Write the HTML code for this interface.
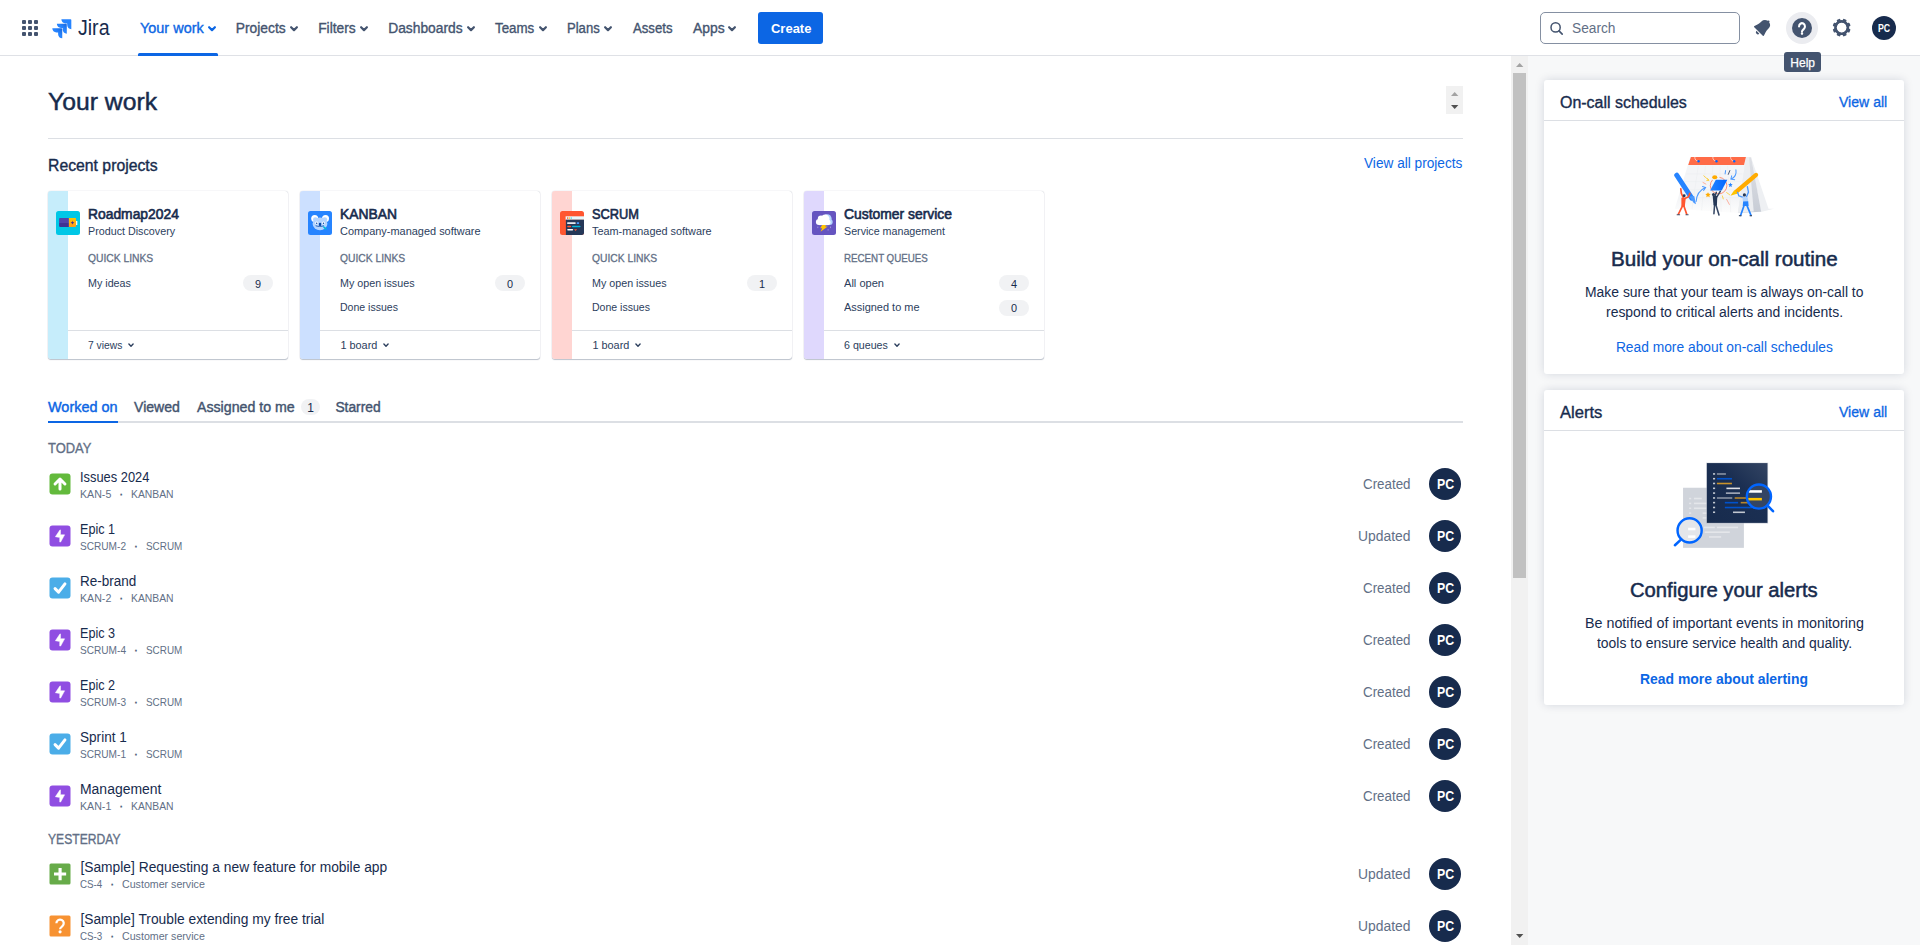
<!DOCTYPE html>
<html lang="en">
<head>
<meta charset="utf-8">
<title>Your work - Jira</title>
<style>
*{box-sizing:border-box;margin:0;padding:0}
html,body{width:1920px;height:945px;overflow:hidden;background:#fff}
body{font-family:"Liberation Sans",sans-serif;font-size:14px;color:#172B4D;position:relative}
.a{position:absolute;white-space:pre;transform-origin:0 50%}
svg{display:block;overflow:visible}
.card{background:#fff;border-radius:3px;box-shadow:0 1px 1px rgba(9,30,66,.25),0 0 1px rgba(9,30,66,.31)}
.badge{background:#F1F2F4;border-radius:8px;height:16px}
.av{width:32px;height:32px;border-radius:50%;background:#172B4D}
.hr{height:1px;background:#DCDFE4}
.rc{background:#fff;border-radius:3px;box-shadow:0 0 10px rgba(9,30,66,.15)}

</style>
</head>
<body>
<!-- ============ RIGHT PANEL BG ============ -->
<div class="a" style="left:1528px;top:56px;width:392px;height:889px;background:#F7F8F9"></div>
<!-- ============ MAIN CONTENT ============ -->
<span class="a" style="left:48.20px;top:89px;font-size:23.5px;line-height:26px;color:#172B4D;transform:scaleX(1.0517);-webkit-text-stroke:0.45px #172B4D;">Your work</span>
<div class="a" style="left:1446px;top:86px;width:17px;height:28px;background:#F1F1F1"></div>
<svg class="a" style="left:1450.8px;top:92.3px" width="7.4" height="4" viewBox="0 0 7.4 4"><polygon points="0,4 3.7,0 7.4,4" fill="#A3A3A3"/></svg>
<svg class="a" style="left:1450.8px;top:104.7px" width="7.4" height="4" viewBox="0 0 7.4 4"><polygon points="0,0 7.4,0 3.7,4" fill="#505050"/></svg>
<div class="a hr" style="left:48px;top:138px;width:1415px"></div>
<span class="a" style="left:48.30px;top:157px;font-size:15.6px;line-height:17px;color:#172B4D;transform:scaleX(1.0116);-webkit-text-stroke:0.35px #172B4D;">Recent projects</span>
<span class="a" style="left:1364.20px;top:156px;font-size:13.8px;line-height:15px;color:#0C66E4;transform:scaleX(0.9896);">View all projects</span>
<div class="a card" style="left:48px;top:191px;width:240px;height:168px"></div>
<div class="a" style="left:48px;top:191px;width:20px;height:168px;background:#C6EDFB;border-radius:3px 0 0 3px"></div>
<svg class="a" style="left:56px;top:211px" width="24" height="24" viewBox="0 0 24 24"><defs><linearGradient id="pb1" x1="0" y1="0" x2="0" y2="1"><stop offset="0" stop-color="#5243AA"/><stop offset="0.5" stop-color="#5243AA"/><stop offset="0.55" stop-color="#403294"/><stop offset="1" stop-color="#403294"/></linearGradient>
<linearGradient id="pb2" x1="0" y1="0" x2="0" y2="1"><stop offset="0" stop-color="#FFC400"/><stop offset="0.5" stop-color="#FFB010"/><stop offset="1" stop-color="#FF991F"/></linearGradient></defs>
<rect width="24" height="24" rx="2.5" fill="#00C7E6"/><rect x="20" y="10" width="1.3" height="4" fill="#fff"/>
<path d="M3.9 7.1h9v8.8h-9a.8.8 0 0 1-.8-.8v-7.2a.8.8 0 0 1 .8-.8z" fill="url(#pb1)"/><path d="M12.9 7.1h6.4a.8.8 0 0 1 .8.8v7.2a.8.8 0 0 1-.8.8h-6.4z" fill="url(#pb2)"/>
<path d="M16.5 9.6c.25 1.4.6 1.8 1.9 2.1-1.3.3-1.65.7-1.9 2.1-.25-1.4-.6-1.8-1.9-2.1 1.3-.3 1.65-.7 1.9-2.1z" fill="#403294"/></svg>
<span class="a" style="left:88.40px;top:207px;font-size:13.8px;line-height:15px;color:#172B4D;transform:scaleX(1.0042);-webkit-text-stroke:0.6px #172B4D;">Roadmap2024</span>
<span class="a" style="left:88.40px;top:225px;font-size:10.8px;line-height:12px;color:#2C3E5D;transform:scaleX(0.9942);">Product Discovery</span>
<span class="a" style="left:88.40px;top:252px;font-size:10.8px;line-height:12px;color:#626F86;transform:scaleX(0.9531);-webkit-text-stroke:0.3px #626F86;">QUICK LINKS</span>
<span class="a" style="left:88.40px;top:277px;font-size:10.9px;line-height:12px;color:#2C3E5D;transform:scaleX(0.9841);">My ideas</span>
<div class="a badge" style="left:243px;top:275.0px;width:30px"></div>
<span class="a" style="left:254.97px;top:278px;font-size:10.9px;line-height:12px;color:#172B4D;">9</span>
<div class="a hr" style="left:68px;top:330px;width:220px"></div>
<span class="a" style="left:88.40px;top:339px;font-size:10.9px;line-height:12px;color:#2C3E5D;transform:scaleX(0.9442);">7 views</span>
<svg class="a" style="left:128.1px;top:343.0px" width="6" height="5" viewBox="0 0 6 5"><path d="M0.9 1.1 L3 3.2 L5.1 1.1" fill="none" stroke="#2C3E5D" stroke-width="1.4" stroke-linecap="round" stroke-linejoin="round"/></svg>
<div class="a card" style="left:300px;top:191px;width:240px;height:168px"></div>
<div class="a" style="left:300px;top:191px;width:20px;height:168px;background:#CCE0FF;border-radius:3px 0 0 3px"></div>
<svg class="a" style="left:308px;top:211px" width="24" height="24" viewBox="0 0 24 24"><rect width="24" height="24" rx="2.5" fill="#2684FF"/>
<circle cx="6.7" cy="7.6" r="3.5" fill="#fff"/><circle cx="17.5" cy="7.6" r="3.5" fill="#fff"/>
<circle cx="7.4" cy="8.6" r="2.4" fill="#B3D4FF"/><circle cx="16.8" cy="8.6" r="2.4" fill="#B3D4FF"/>
<ellipse cx="12" cy="12.8" rx="7.4" ry="6.4" fill="#B3D4FF"/>
<circle cx="8.7" cy="12" r="1.5" fill="#fff"/><circle cx="15.5" cy="12" r="1.5" fill="#fff"/>
<circle cx="8.7" cy="12.3" r="0.75" fill="#0747A6"/><circle cx="15.5" cy="12.3" r="0.75" fill="#0747A6"/>
<rect x="10.9" y="11.8" width="2.3" height="3.2" rx="1" fill="#0747A6"/><path d="M8 14.9c1.2.7 6 .7 7.6 0" fill="none" stroke="#0747A6" stroke-width="0.8" stroke-linecap="round"/>
<path d="M14.9 15.2c1.6-.2 3.2 1 4.2 3.4-2 .1-3.8-1-4.2-3.4z" fill="#00B8D9"/></svg>
<span class="a" style="left:340.40px;top:207px;font-size:13.8px;line-height:15px;color:#172B4D;transform:scaleX(1.0044);-webkit-text-stroke:0.6px #172B4D;">KANBAN</span>
<span class="a" style="left:340.40px;top:225px;font-size:10.8px;line-height:12px;color:#2C3E5D;transform:scaleX(1.0134);">Company-managed software</span>
<span class="a" style="left:340.40px;top:252px;font-size:10.8px;line-height:12px;color:#626F86;transform:scaleX(0.9531);-webkit-text-stroke:0.3px #626F86;">QUICK LINKS</span>
<span class="a" style="left:340.40px;top:277px;font-size:10.9px;line-height:12px;color:#2C3E5D;transform:scaleX(0.9845);">My open issues</span>
<div class="a badge" style="left:495px;top:275.0px;width:30px"></div>
<span class="a" style="left:506.97px;top:278px;font-size:10.9px;line-height:12px;color:#172B4D;">0</span>
<span class="a" style="left:340.40px;top:301px;font-size:10.9px;line-height:12px;color:#2C3E5D;transform:scaleX(0.9677);">Done issues</span>
<div class="a hr" style="left:320px;top:330px;width:220px"></div>
<span class="a" style="left:340.40px;top:339px;font-size:10.9px;line-height:12px;color:#2C3E5D;">1 board</span>
<svg class="a" style="left:382.79999999999995px;top:343.0px" width="6" height="5" viewBox="0 0 6 5"><path d="M0.9 1.1 L3 3.2 L5.1 1.1" fill="none" stroke="#2C3E5D" stroke-width="1.4" stroke-linecap="round" stroke-linejoin="round"/></svg>
<div class="a card" style="left:552px;top:191px;width:240px;height:168px"></div>
<div class="a" style="left:552px;top:191px;width:20px;height:168px;background:#FFD5D2;border-radius:3px 0 0 3px"></div>
<svg class="a" style="left:560px;top:211px" width="24" height="24" viewBox="0 0 24 24"><defs><clipPath id="pcc"><rect width="24" height="24" rx="2.5"/></clipPath></defs>
<g clip-path="url(#pcc)"><rect width="24" height="24" fill="#FF5630"/><rect x="5.6" y="5.3" width="19" height="3.5" fill="#E9F8FC"/><rect x="5.9" y="8.7" width="19" height="16" fill="#253858"/>
<rect x="7" y="6.2" width="1.3" height="1.8" fill="#FF7452"/><rect x="8.9" y="6.2" width="1.3" height="1.8" fill="#FFD44D"/><rect x="10.7" y="6.2" width="1.3" height="1.8" fill="#79E2F2"/>
<rect x="7.2" y="11.2" width="8.4" height="1.9" rx="0.3" fill="#EBECF0"/><rect x="16.8" y="11.2" width="2.3" height="1.9" rx="0.3" fill="#4C9AFF"/>
<rect x="7.2" y="14.7" width="4" height="1.6" rx="0.8" fill="#FF5630"/><rect x="12" y="14.7" width="8.6" height="1.6" rx="0.8" fill="#00B8D9"/>
<rect x="7.2" y="17.9" width="6" height="1.6" rx="0.8" fill="#fff"/><path d="M14 18.3h3.2l-1.6 1.7z" fill="#FF5630"/></g></svg>
<span class="a" style="left:592.40px;top:207px;font-size:13.8px;line-height:15px;color:#172B4D;transform:scaleX(0.9290);-webkit-text-stroke:0.6px #172B4D;">SCRUM</span>
<span class="a" style="left:592.40px;top:225px;font-size:10.8px;line-height:12px;color:#2C3E5D;transform:scaleX(1.0065);">Team-managed software</span>
<span class="a" style="left:592.40px;top:252px;font-size:10.8px;line-height:12px;color:#626F86;transform:scaleX(0.9531);-webkit-text-stroke:0.3px #626F86;">QUICK LINKS</span>
<span class="a" style="left:592.40px;top:277px;font-size:10.9px;line-height:12px;color:#2C3E5D;transform:scaleX(0.9845);">My open issues</span>
<div class="a badge" style="left:747px;top:275.0px;width:30px"></div>
<span class="a" style="left:758.97px;top:278px;font-size:10.9px;line-height:12px;color:#172B4D;">1</span>
<span class="a" style="left:592.40px;top:301px;font-size:10.9px;line-height:12px;color:#2C3E5D;transform:scaleX(0.9677);">Done issues</span>
<div class="a hr" style="left:572px;top:330px;width:220px"></div>
<span class="a" style="left:592.40px;top:339px;font-size:10.9px;line-height:12px;color:#2C3E5D;">1 board</span>
<svg class="a" style="left:634.8px;top:343.0px" width="6" height="5" viewBox="0 0 6 5"><path d="M0.9 1.1 L3 3.2 L5.1 1.1" fill="none" stroke="#2C3E5D" stroke-width="1.4" stroke-linecap="round" stroke-linejoin="round"/></svg>
<div class="a card" style="left:804px;top:191px;width:240px;height:168px"></div>
<div class="a" style="left:804px;top:191px;width:20px;height:168px;background:#DFD8FD;border-radius:3px 0 0 3px"></div>
<svg class="a" style="left:812px;top:211px" width="24" height="24" viewBox="0 0 24 24"><rect width="24" height="24" rx="2.5" fill="#6554C0"/>
<g fill="#B3D4FF"><circle cx="15.2" cy="7.6" r="4.4"/><circle cx="17.7" cy="11.1" r="3"/><rect x="12" y="9" width="5.5" height="5.1"/></g>
<g fill="#fff"><circle cx="6.9" cy="11.1" r="3"/><circle cx="9" cy="7.7" r="3.2"/><circle cx="13.2" cy="7.7" r="4.3"/><circle cx="15.7" cy="11.3" r="2.8"/><rect x="6.9" y="8" width="8.8" height="6.1"/></g>
<path d="M10.1 14.1h3.9l-.8 1.5h2.5l-7.2 5.2 1.7-3.5H8.2z" fill="#FFC400"/>
<rect x="5.3" y="15.5" width="1" height="1.6" fill="#998DD9"/><rect x="18" y="15.5" width="1" height="1.6" fill="#998DD9"/><rect x="15.6" y="18" width="1" height="1.6" fill="#998DD9"/></svg>
<span class="a" style="left:844.40px;top:207px;font-size:13.8px;line-height:15px;color:#172B4D;transform:scaleX(1.0061);-webkit-text-stroke:0.6px #172B4D;">Customer service</span>
<span class="a" style="left:844.40px;top:225px;font-size:10.8px;line-height:12px;color:#2C3E5D;transform:scaleX(0.9899);">Service management</span>
<span class="a" style="left:844.40px;top:252px;font-size:10.8px;line-height:12px;color:#626F86;transform:scaleX(0.9030);-webkit-text-stroke:0.3px #626F86;">RECENT QUEUES</span>
<span class="a" style="left:844.40px;top:277px;font-size:10.9px;line-height:12px;color:#2C3E5D;transform:scaleX(1.0163);">All open</span>
<div class="a badge" style="left:999px;top:275.0px;width:30px"></div>
<span class="a" style="left:1010.97px;top:278px;font-size:10.9px;line-height:12px;color:#172B4D;">4</span>
<span class="a" style="left:844.40px;top:301px;font-size:10.9px;line-height:12px;color:#2C3E5D;transform:scaleX(1.0056);">Assigned to me</span>
<div class="a badge" style="left:999px;top:299.5px;width:30px"></div>
<span class="a" style="left:1010.97px;top:302px;font-size:10.9px;line-height:12px;color:#172B4D;">0</span>
<div class="a hr" style="left:824px;top:330px;width:220px"></div>
<span class="a" style="left:844.40px;top:339px;font-size:10.9px;line-height:12px;color:#2C3E5D;transform:scaleX(0.9774);">6 queues</span>
<svg class="a" style="left:893.5999999999999px;top:343.0px" width="6" height="5" viewBox="0 0 6 5"><path d="M0.9 1.1 L3 3.2 L5.1 1.1" fill="none" stroke="#2C3E5D" stroke-width="1.4" stroke-linecap="round" stroke-linejoin="round"/></svg>
<span class="a" style="left:48.30px;top:400px;font-size:13.8px;line-height:15px;color:#0C66E4;transform:scaleX(1.0471);-webkit-text-stroke:0.4px #0C66E4;">Worked on</span>
<span class="a" style="left:134.20px;top:400px;font-size:13.8px;line-height:15px;color:#44546F;transform:scaleX(1.0196);-webkit-text-stroke:0.4px #44546F;">Viewed</span>
<span class="a" style="left:196.80px;top:400px;font-size:13.8px;line-height:15px;color:#44546F;transform:scaleX(1.0272);-webkit-text-stroke:0.4px #44546F;">Assigned to me</span>
<div class="a badge" style="left:301px;top:399px;width:19px"></div>
<span class="a" style="left:307.16px;top:401px;font-size:12px;line-height:14px;color:#172B4D;">1</span>
<span class="a" style="left:335.40px;top:400px;font-size:13.8px;line-height:15px;color:#44546F;-webkit-text-stroke:0.4px #44546F;">Starred</span>
<div class="a" style="left:48px;top:421px;width:1415px;height:2px;background:#DCDFE4"></div>
<div class="a" style="left:48px;top:421px;width:70px;height:2px;background:#0C66E4"></div>
<span class="a" style="left:48.30px;top:440px;font-size:14.2px;line-height:16px;color:#626F86;transform:scaleX(0.9122);-webkit-text-stroke:0.35px #626F86;">TODAY</span>
<span class="a" style="left:48.30px;top:831px;font-size:14.2px;line-height:16px;color:#626F86;transform:scaleX(0.8540);-webkit-text-stroke:0.35px #626F86;">YESTERDAY</span>
<svg class="a" style="left:48px;top:472px" width="24" height="24" viewBox="0 0 16 16"><rect x="1" y="1" width="14" height="14" rx="2" fill="#63BA3C"/><path d="M8 11.3V4.8M4.7 8 8 4.7 11.3 8" fill="none" stroke="#fff" stroke-width="2" stroke-linecap="round" stroke-linejoin="round"/></svg>
<span class="a" style="left:80.40px;top:470px;font-size:13.8px;line-height:15px;color:#172B4D;transform:scaleX(0.9327);">Issues 2024</span>
<span class="a" style="left:80.40px;top:488px;font-size:10.8px;line-height:12px;color:#626F86;transform:scaleX(0.9839);">KAN-5</span>
<span class="a" style="left:118.93px;top:486px;font-size:13px;line-height:15px;color:#44546F;-webkit-text-stroke:0.3px #44546F;">·</span>
<span class="a" style="left:130.80px;top:488px;font-size:10.8px;line-height:12px;color:#626F86;transform:scaleX(0.9593);">KANBAN</span>
<span class="a" style="left:1363.00px;top:477px;font-size:13.8px;line-height:15px;color:#626F86;transform:scaleX(0.9675);">Created</span>
<div class="a av" style="left:1429px;top:468px"></div>
<span class="a" style="left:1436.70px;top:477px;font-size:13.8px;line-height:15px;color:#fff;font-weight:700;transform:scaleX(0.8919);">PC</span>
<svg class="a" style="left:48px;top:524px" width="24" height="24" viewBox="0 0 16 16"><rect x="1" y="1" width="14" height="14" rx="2" fill="#904EE2"/><path d="M8 3.9 8.35 4.05 8.35 7.1 11.1 7.2 8.45 12.05 7.8 12.05 7.8 9 4.9 8.5z" fill="#fff" stroke="#fff" stroke-width="0.3" stroke-linejoin="round"/></svg>
<span class="a" style="left:80.40px;top:522px;font-size:13.8px;line-height:15px;color:#172B4D;transform:scaleX(0.9150);">Epic 1</span>
<span class="a" style="left:80.40px;top:540px;font-size:10.8px;line-height:12px;color:#626F86;transform:scaleX(0.9352);">SCRUM-2</span>
<span class="a" style="left:133.63px;top:538px;font-size:13px;line-height:15px;color:#44546F;-webkit-text-stroke:0.3px #44546F;">·</span>
<span class="a" style="left:145.50px;top:540px;font-size:10.8px;line-height:12px;color:#626F86;transform:scaleX(0.9168);">SCRUM</span>
<span class="a" style="left:1358.00px;top:529px;font-size:13.8px;line-height:15px;color:#626F86;transform:scaleX(1.0063);">Updated</span>
<div class="a av" style="left:1429px;top:520px"></div>
<span class="a" style="left:1436.70px;top:529px;font-size:13.8px;line-height:15px;color:#fff;font-weight:700;transform:scaleX(0.8919);">PC</span>
<svg class="a" style="left:48px;top:576px" width="24" height="24" viewBox="0 0 16 16"><rect x="1" y="1" width="14" height="14" rx="2" fill="#4BADE8"/><path d="M4.7 8.4 7.05 10.75 11.3 5.3" fill="none" stroke="#fff" stroke-width="2" stroke-linecap="round" stroke-linejoin="round"/></svg>
<span class="a" style="left:80.40px;top:574px;font-size:13.8px;line-height:15px;color:#172B4D;transform:scaleX(0.9786);">Re-brand</span>
<span class="a" style="left:80.40px;top:592px;font-size:10.8px;line-height:12px;color:#626F86;transform:scaleX(0.9839);">KAN-2</span>
<span class="a" style="left:118.93px;top:590px;font-size:13px;line-height:15px;color:#44546F;-webkit-text-stroke:0.3px #44546F;">·</span>
<span class="a" style="left:130.80px;top:592px;font-size:10.8px;line-height:12px;color:#626F86;transform:scaleX(0.9593);">KANBAN</span>
<span class="a" style="left:1363.00px;top:581px;font-size:13.8px;line-height:15px;color:#626F86;transform:scaleX(0.9675);">Created</span>
<div class="a av" style="left:1429px;top:572px"></div>
<span class="a" style="left:1436.70px;top:581px;font-size:13.8px;line-height:15px;color:#fff;font-weight:700;transform:scaleX(0.8919);">PC</span>
<svg class="a" style="left:48px;top:628px" width="24" height="24" viewBox="0 0 16 16"><rect x="1" y="1" width="14" height="14" rx="2" fill="#904EE2"/><path d="M8 3.9 8.35 4.05 8.35 7.1 11.1 7.2 8.45 12.05 7.8 12.05 7.8 9 4.9 8.5z" fill="#fff" stroke="#fff" stroke-width="0.3" stroke-linejoin="round"/></svg>
<span class="a" style="left:80.40px;top:626px;font-size:13.8px;line-height:15px;color:#172B4D;transform:scaleX(0.9150);">Epic 3</span>
<span class="a" style="left:80.40px;top:644px;font-size:10.8px;line-height:12px;color:#626F86;transform:scaleX(0.9352);">SCRUM-4</span>
<span class="a" style="left:133.63px;top:642px;font-size:13px;line-height:15px;color:#44546F;-webkit-text-stroke:0.3px #44546F;">·</span>
<span class="a" style="left:145.50px;top:644px;font-size:10.8px;line-height:12px;color:#626F86;transform:scaleX(0.9168);">SCRUM</span>
<span class="a" style="left:1363.00px;top:633px;font-size:13.8px;line-height:15px;color:#626F86;transform:scaleX(0.9675);">Created</span>
<div class="a av" style="left:1429px;top:624px"></div>
<span class="a" style="left:1436.70px;top:633px;font-size:13.8px;line-height:15px;color:#fff;font-weight:700;transform:scaleX(0.8919);">PC</span>
<svg class="a" style="left:48px;top:680px" width="24" height="24" viewBox="0 0 16 16"><rect x="1" y="1" width="14" height="14" rx="2" fill="#904EE2"/><path d="M8 3.9 8.35 4.05 8.35 7.1 11.1 7.2 8.45 12.05 7.8 12.05 7.8 9 4.9 8.5z" fill="#fff" stroke="#fff" stroke-width="0.3" stroke-linejoin="round"/></svg>
<span class="a" style="left:80.40px;top:678px;font-size:13.8px;line-height:15px;color:#172B4D;transform:scaleX(0.9150);">Epic 2</span>
<span class="a" style="left:80.40px;top:696px;font-size:10.8px;line-height:12px;color:#626F86;transform:scaleX(0.9352);">SCRUM-3</span>
<span class="a" style="left:133.63px;top:694px;font-size:13px;line-height:15px;color:#44546F;-webkit-text-stroke:0.3px #44546F;">·</span>
<span class="a" style="left:145.50px;top:696px;font-size:10.8px;line-height:12px;color:#626F86;transform:scaleX(0.9168);">SCRUM</span>
<span class="a" style="left:1363.00px;top:685px;font-size:13.8px;line-height:15px;color:#626F86;transform:scaleX(0.9675);">Created</span>
<div class="a av" style="left:1429px;top:676px"></div>
<span class="a" style="left:1436.70px;top:685px;font-size:13.8px;line-height:15px;color:#fff;font-weight:700;transform:scaleX(0.8919);">PC</span>
<svg class="a" style="left:48px;top:732px" width="24" height="24" viewBox="0 0 16 16"><rect x="1" y="1" width="14" height="14" rx="2" fill="#4BADE8"/><path d="M4.7 8.4 7.05 10.75 11.3 5.3" fill="none" stroke="#fff" stroke-width="2" stroke-linecap="round" stroke-linejoin="round"/></svg>
<span class="a" style="left:80.40px;top:730px;font-size:13.8px;line-height:15px;color:#172B4D;transform:scaleX(0.9840);">Sprint 1</span>
<span class="a" style="left:80.40px;top:748px;font-size:10.8px;line-height:12px;color:#626F86;transform:scaleX(0.9352);">SCRUM-1</span>
<span class="a" style="left:133.63px;top:746px;font-size:13px;line-height:15px;color:#44546F;-webkit-text-stroke:0.3px #44546F;">·</span>
<span class="a" style="left:145.50px;top:748px;font-size:10.8px;line-height:12px;color:#626F86;transform:scaleX(0.9168);">SCRUM</span>
<span class="a" style="left:1363.00px;top:737px;font-size:13.8px;line-height:15px;color:#626F86;transform:scaleX(0.9675);">Created</span>
<div class="a av" style="left:1429px;top:728px"></div>
<span class="a" style="left:1436.70px;top:737px;font-size:13.8px;line-height:15px;color:#fff;font-weight:700;transform:scaleX(0.8919);">PC</span>
<svg class="a" style="left:48px;top:784px" width="24" height="24" viewBox="0 0 16 16"><rect x="1" y="1" width="14" height="14" rx="2" fill="#904EE2"/><path d="M8 3.9 8.35 4.05 8.35 7.1 11.1 7.2 8.45 12.05 7.8 12.05 7.8 9 4.9 8.5z" fill="#fff" stroke="#fff" stroke-width="0.3" stroke-linejoin="round"/></svg>
<span class="a" style="left:80.40px;top:782px;font-size:13.8px;line-height:15px;color:#172B4D;transform:scaleX(1.0108);">Management</span>
<span class="a" style="left:80.40px;top:800px;font-size:10.8px;line-height:12px;color:#626F86;transform:scaleX(0.9839);">KAN-1</span>
<span class="a" style="left:118.93px;top:798px;font-size:13px;line-height:15px;color:#44546F;-webkit-text-stroke:0.3px #44546F;">·</span>
<span class="a" style="left:130.80px;top:800px;font-size:10.8px;line-height:12px;color:#626F86;transform:scaleX(0.9593);">KANBAN</span>
<span class="a" style="left:1363.00px;top:789px;font-size:13.8px;line-height:15px;color:#626F86;transform:scaleX(0.9675);">Created</span>
<div class="a av" style="left:1429px;top:780px"></div>
<span class="a" style="left:1436.70px;top:789px;font-size:13.8px;line-height:15px;color:#fff;font-weight:700;transform:scaleX(0.8919);">PC</span>
<svg class="a" style="left:48px;top:862px" width="24" height="24" viewBox="0 0 16 16"><rect x="1" y="1.05" width="14" height="14" rx="1" fill="#67AB49"/><path d="M4 8h8.1M8.05 4v8.1" fill="none" stroke="#fff" stroke-width="2.1"/></svg>
<span class="a" style="left:80.40px;top:860px;font-size:13.8px;line-height:15px;color:#172B4D;">[Sample] Requesting a new feature for mobile app</span>
<span class="a" style="left:80.40px;top:878px;font-size:10.8px;line-height:12px;color:#626F86;transform:scaleX(0.9062);">CS-4</span>
<span class="a" style="left:109.93px;top:876px;font-size:13px;line-height:15px;color:#44546F;-webkit-text-stroke:0.3px #44546F;">·</span>
<span class="a" style="left:121.80px;top:878px;font-size:10.8px;line-height:12px;color:#626F86;transform:scaleX(0.9857);">Customer service</span>
<span class="a" style="left:1358.00px;top:867px;font-size:13.8px;line-height:15px;color:#626F86;transform:scaleX(1.0063);">Updated</span>
<div class="a av" style="left:1429px;top:858px"></div>
<span class="a" style="left:1436.70px;top:867px;font-size:13.8px;line-height:15px;color:#fff;font-weight:700;transform:scaleX(0.8919);">PC</span>
<svg class="a" style="left:48px;top:914px" width="24" height="24" viewBox="0 0 16 16"><rect x="1" y="1.05" width="14" height="14" rx="1" fill="#F79232"/><circle cx="8.05" cy="11.9" r="1.05" fill="#fff"/><path d="M5.6 6.2a2.45 2.45 0 1 1 3.9 1.95c-.95.7-1.45 1.05-1.45 1.95" fill="none" stroke="#fff" stroke-width="1.5"/></svg>
<span class="a" style="left:80.40px;top:912px;font-size:13.8px;line-height:15px;color:#172B4D;">[Sample] Trouble extending my free trial</span>
<span class="a" style="left:80.40px;top:930px;font-size:10.8px;line-height:12px;color:#626F86;transform:scaleX(0.9062);">CS-3</span>
<span class="a" style="left:109.93px;top:928px;font-size:13px;line-height:15px;color:#44546F;-webkit-text-stroke:0.3px #44546F;">·</span>
<span class="a" style="left:121.80px;top:930px;font-size:10.8px;line-height:12px;color:#626F86;transform:scaleX(0.9857);">Customer service</span>
<span class="a" style="left:1358.00px;top:919px;font-size:13.8px;line-height:15px;color:#626F86;transform:scaleX(1.0063);">Updated</span>
<div class="a av" style="left:1429px;top:910px"></div>
<span class="a" style="left:1436.70px;top:919px;font-size:13.8px;line-height:15px;color:#fff;font-weight:700;transform:scaleX(0.8919);">PC</span>
<div class="a" style="left:1511px;top:56px;width:17px;height:889px;background:#F1F1F1"></div>
<div class="a" style="left:1513px;top:73px;width:13px;height:505px;background:#C1C1C1"></div>
<svg class="a" style="left:1515.8px;top:63px" width="7.4" height="4" viewBox="0 0 7.4 4"><polygon points="0,4 3.7,0 7.4,4" fill="#A3A3A3"/></svg>
<svg class="a" style="left:1515.8px;top:934px" width="7.4" height="4" viewBox="0 0 7.4 4"><polygon points="0,0 7.4,0 3.7,4" fill="#505050"/></svg>
<!-- ============ RIGHT PANEL ============ -->
<div class="a rc" style="left:1544px;top:80px;width:360px;height:294px"></div>
<div class="a hr" style="left:1544px;top:120px;width:360px"></div>
<span class="a" style="left:1560.20px;top:94px;font-size:15.6px;line-height:17px;color:#172B4D;transform:scaleX(1.0230);-webkit-text-stroke:0.35px #172B4D;">On-call schedules</span>
<span class="a" style="left:1839.40px;top:95px;font-size:13.8px;line-height:15px;color:#0C66E4;transform:scaleX(1.0191);-webkit-text-stroke:0.3px #0C66E4;">View all</span>
<svg class="a" style="left:1664px;top:146px" width="120" height="80" viewBox="0 0 1418 945">
<defs>
<linearGradient id="cal1" x1="0" y1="0" x2="0" y2="1"><stop offset="0" stop-color="#F4F5F7"/><stop offset="0.75" stop-color="#F4F5F7"/><stop offset="1" stop-color="#FDFDFD"/></linearGradient>
<linearGradient id="cal2" x1="0" y1="0" x2="0" y2="1"><stop offset="0" stop-color="#DFE1E6"/><stop offset="1" stop-color="#C7CCD5"/></linearGradient>
<linearGradient id="cal3" x1="0" y1="0" x2="1" y2="0"><stop offset="0" stop-color="#2684FF"/><stop offset="1" stop-color="#0065FF"/></linearGradient>
</defs>
<polygon points="1030,135 1235,742 1300,742 1145,780" fill="#EEF0F3"/>
<polygon points="965,130 1030,132 1148,778 870,792" fill="url(#cal2)"/>
<polygon points="965,130 1005,130 1060,775 870,792" fill="#ECEEF1"/>
<polygon points="310,130 968,130 872,792 128,742" fill="url(#cal1)"/>
<g stroke="#E9EBEF" stroke-width="5" fill="none"><path d="M262,330H925M238,420H912M212,515H898M190,610H885M405,235 330,745M490,235 445,760M575,235 560,770M662,235 675,775M750,235 790,785"/></g>
<polygon points="318,130 968,130 946,225 286,225" fill="#FF6B47"/>
<g fill="none" stroke="#FFFFFF" stroke-width="8" opacity="0.9"><path d="M452,112A47,47 0 1 0 400,180"/><path d="M665,112A47,47 0 1 0 612,180"/><path d="M875,112A47,47 0 1 0 822,180"/></g>
<circle cx="408" cy="180" r="14" fill="#0065FF"/><circle cx="620" cy="180" r="14" fill="#0065FF"/><circle cx="830" cy="180" r="14" fill="#0065FF"/>
<!-- sparkles -->
<circle cx="645" cy="468" r="98" fill="none" stroke="#FF7452" stroke-width="9" stroke-dasharray="380 90"/>
<polygon points="612,400 748,400 682,527 545,527" fill="url(#cal3)"/>
<ellipse cx="600" cy="368" rx="30" ry="24" fill="#FFAB00"/>
<polygon points="520,545 530,565 552,568 536,583 540,605 520,594 500,605 504,583 488,568 510,565" fill="#FFAB00"/>
<polygon points="785,432 792,450 812,452 797,465 802,485 785,474 768,485 773,465 758,452 778,450" fill="#2684FF"/>
<g fill="none" stroke="#4C9AFF" stroke-width="12" stroke-linecap="round"><path d="M380,655C385,580 420,520 490,490M455,478 492,490 468,525"/><path d="M850,280C858,330 838,370 792,392M800,352 790,392 835,398"/><path d="M728,290 722,330"/></g>
<path d="M778,290 760,335" stroke="#253858" stroke-width="10" stroke-linecap="round"/>
<g fill="none" stroke="#FFC400" stroke-width="8" stroke-linecap="round"><path d="M470,352 530,405M515,385 530,405 505,408"/><path d="M740,550 775,575M690,590 700,625"/></g>
<g fill="none" stroke="#FF8F73" stroke-width="8" stroke-linecap="round"><path d="M460,430 495,450M740,630 772,690"/></g>
<!-- blue pen -->
<path d="M150,345 L328,615" stroke="#2684FF" stroke-width="58" stroke-linecap="round"/>
<polygon points="298,598 357,592 378,688 352,672" fill="#4C9AFF"/>
<!-- yellow pen -->
<path d="M1088,342 L858,535" stroke="#FFAB00" stroke-width="50" stroke-linecap="round"/>
<polygon points="832,520 872,562 785,588" fill="#FFC400"/>
<!-- person 1 (red) -->
<g stroke="#FF5630" stroke-width="20" stroke-linecap="round" stroke-linejoin="round" fill="none"><path d="M232,620 205,560 198,505"/><path d="M245,620 290,600 305,560"/><path d="M222,700 170,805M232,700 268,805"/></g>
<path d="M205,610 L258,615 L245,720 L205,715z" fill="#FF5630"/><circle cx="238" cy="588" r="17" fill="#253858"/>
<path d="M150,805h40v12h-40zM255,805h35v12h-35z" fill="#42526E"/>
<!-- person 2 (navy) -->
<g stroke="#344563" stroke-width="18" stroke-linecap="round" stroke-linejoin="round" fill="none"><path d="M600,600 618,548M625,600 665,535"/><path d="M598,690 590,800M612,690 650,815"/></g>
<path d="M575,585 L630,590 L625,700 L585,700z" fill="#253858"/><circle cx="585" cy="572" r="18" fill="#253858"/>
<!-- person 3 (blue) -->
<g stroke="#4C9AFF" stroke-width="16" stroke-linecap="round" stroke-linejoin="round" fill="none"><path d="M945,610 885,590 870,548"/><path d="M975,600 998,545 985,480"/></g>
<g stroke="#2684FF" stroke-width="20" stroke-linecap="round" stroke-linejoin="round" fill="none"><path d="M950,690 905,820M975,690 1028,820"/></g>
<path d="M925,600 L990,605 L995,660 L935,665z" fill="#B3D4FF"/><path d="M935,655 L995,652 L1000,710 L930,710z" fill="#2684FF"/><circle cx="950" cy="578" r="19" fill="#253858"/>
<path d="M885,815h30v14h-30zM1012,815h28v14h-28z" fill="#42526E"/>
</svg>
<span class="a" style="left:1610.80px;top:248px;font-size:19.6px;line-height:22px;color:#172B4D;transform:scaleX(1.0517);-webkit-text-stroke:0.5px #172B4D;">Build your on-call routine</span>
<span class="a" style="left:1585.00px;top:285px;font-size:13.8px;line-height:15px;color:#172B4D;transform:scaleX(1.0088);">Make sure that your team is always on-call to</span>
<span class="a" style="left:1605.50px;top:305px;font-size:13.8px;line-height:15px;color:#172B4D;transform:scaleX(1.0103);">respond to critical alerts and incidents.</span>
<span class="a" style="left:1615.90px;top:340px;font-size:13.8px;line-height:15px;color:#0C66E4;">Read more about on-call schedules</span>
<div class="a rc" style="left:1544px;top:390px;width:360px;height:315px"></div>
<div class="a hr" style="left:1544px;top:430px;width:360px"></div>
<span class="a" style="left:1560.20px;top:404px;font-size:15.6px;line-height:17px;color:#172B4D;transform:scaleX(1.0633);-webkit-text-stroke:0.35px #172B4D;">Alerts</span>
<span class="a" style="left:1839.40px;top:405px;font-size:13.8px;line-height:15px;color:#0C66E4;transform:scaleX(1.0191);-webkit-text-stroke:0.3px #0C66E4;">View all</span>
<svg class="a" style="left:1664px;top:456px" width="120" height="100" viewBox="0 0 1134 945">
<defs><linearGradient id="al1" x1="0" y1="1" x2="1" y2="0"><stop offset="0" stop-color="#172B4D"/><stop offset="0.6" stop-color="#1B2F52"/><stop offset="1" stop-color="#344563"/></linearGradient></defs>
<rect x="180" y="300" width="575" height="568" fill="#D0D4DB"/><rect x="237" y="395" width="20" height="14" fill="#E4E6EA"/><rect x="237" y="441" width="20" height="14" fill="#E4E6EA"/><rect x="237" y="487" width="20" height="14" fill="#E4E6EA"/><rect x="237" y="533" width="20" height="14" fill="#E4E6EA"/><rect x="283" y="394.5" width="74" height="15" fill="#E4E6EA"/><rect x="283" y="440.5" width="122" height="15" fill="#E4E6EA"/><rect x="283" y="486.5" width="122" height="15" fill="#E4E6EA"/><rect x="365" y="532.5" width="40" height="15" fill="#E4E6EA"/><rect x="365" y="577.5" width="40" height="15" fill="#E4E6EA"/><rect x="375" y="667.5" width="105" height="15" fill="#E4E6EA"/><rect x="500" y="667.5" width="200" height="15" fill="#E4E6EA"/><rect x="385" y="712.5" width="237" height="15" fill="#E4E6EA"/><rect x="425" y="757.5" width="115" height="15" fill="#E4E6EA"/>
<rect x="398" y="62" width="586" height="578" fill="#B3BAC5" opacity="0.5"/>
<rect x="405" y="67" width="573" height="565" fill="url(#al1)"/><rect x="463" y="162" width="20" height="15" fill="#C1C7D0"/><rect x="463" y="207" width="20" height="15" fill="#C1C7D0"/><rect x="463" y="252" width="20" height="15" fill="#C1C7D0"/><rect x="463" y="298" width="20" height="15" fill="#C1C7D0"/><rect x="463" y="343" width="20" height="15" fill="#C1C7D0"/><rect x="463" y="389" width="20" height="15" fill="#C1C7D0"/><rect x="463" y="433" width="20" height="15" fill="#C1C7D0"/><rect x="463" y="479" width="20" height="15" fill="#C1C7D0"/><rect x="463" y="524" width="20" height="15" fill="#C1C7D0"/><rect x="500" y="162.5" width="85" height="15" fill="#8993A4"/><rect x="500" y="207.5" width="142" height="15" fill="#0052CC"/><rect x="500" y="252.5" width="142" height="15" fill="#C9932A"/><rect x="590" y="298.5" width="128" height="15" fill="#DFE1E6"/><rect x="585" y="343.5" width="133" height="15" fill="#A5ADBA"/><rect x="500" y="389.5" width="145" height="15" fill="#8993A4"/><rect x="668" y="389.5" width="122" height="15" fill="#B8862B"/><rect x="575" y="433.5" width="125" height="15" fill="#0052CC"/><rect x="725" y="433.5" width="75" height="15" fill="#B8862B"/><rect x="575" y="479.5" width="255" height="15" fill="#0052CC"/><rect x="652" y="524.5" width="113" height="15" fill="#C1C7D0"/>
<circle cx="897" cy="383" r="114" fill="#344563"/><rect x="800" y="323.0" width="125" height="24" fill="#fff"/><rect x="795" y="396.0" width="130" height="24" fill="#FFC400"/>
<circle cx="897" cy="383" r="114" fill="none" stroke="#0065FF" stroke-width="23"/><path d="M982,472 1030,522" stroke="#0065FF" stroke-width="24" stroke-linecap="round"/>
<circle cx="242" cy="703" r="114" fill="#E4E6EA"/><rect x="228" y="678.0" width="69" height="24" fill="#fff"/><rect x="228" y="750.0" width="69" height="24" fill="#fff"/>
<circle cx="242" cy="703" r="114" fill="none" stroke="#0065FF" stroke-width="23"/><path d="M160,790 103,843" stroke="#0065FF" stroke-width="24" stroke-linecap="round"/>
</svg>
<span class="a" style="left:1630.30px;top:579px;font-size:19.6px;line-height:22px;color:#172B4D;transform:scaleX(1.0320);-webkit-text-stroke:0.5px #172B4D;">Configure your alerts</span>
<span class="a" style="left:1584.60px;top:616px;font-size:13.8px;line-height:15px;color:#172B4D;transform:scaleX(1.0360);">Be notified of important events in monitoring</span>
<span class="a" style="left:1596.50px;top:636px;font-size:13.8px;line-height:15px;color:#172B4D;transform:scaleX(1.0089);">tools to ensure service health and quality.</span>
<span class="a" style="left:1640.40px;top:671px;font-size:14px;line-height:16px;color:#0C66E4;font-weight:700;transform:scaleX(0.9952);">Read more about alerting</span>
<!-- ============ TOP NAV ============ -->
<div class="a" style="left:0;top:0;width:1920px;height:56px;background:#fff"></div>
<div class="a" style="left:0;top:55px;width:1920px;height:1px;background:#DFE1E6"></div>
<svg class="a" style="left:22px;top:20px" width="16" height="16" viewBox="0 0 16 16"><rect x="0" y="0" width="4" height="4" rx="1" fill="#44546F"/><rect x="6" y="0" width="4" height="4" rx="1" fill="#44546F"/><rect x="12" y="0" width="4" height="4" rx="1" fill="#44546F"/><rect x="0" y="6" width="4" height="4" rx="1" fill="#44546F"/><rect x="6" y="6" width="4" height="4" rx="1" fill="#44546F"/><rect x="12" y="6" width="4" height="4" rx="1" fill="#44546F"/><rect x="0" y="12" width="4" height="4" rx="1" fill="#44546F"/><rect x="6" y="12" width="4" height="4" rx="1" fill="#44546F"/><rect x="12" y="12" width="4" height="4" rx="1" fill="#44546F"/></svg>
<svg class="a" style="left:48.7px;top:15.75px" width="26" height="26" viewBox="0 0 32 32">
<defs><linearGradient id="jg1" x1="21.6" y1="9.7" x2="16.8" y2="14.6" gradientUnits="userSpaceOnUse"><stop offset="0.18" stop-color="#1D6BE0"/><stop offset="1" stop-color="#2684FF"/></linearGradient>
<linearGradient id="jg2" x1="16.4" y1="15.3" x2="10.9" y2="20.7" gradientUnits="userSpaceOnUse"><stop offset="0.18" stop-color="#1D6BE0"/><stop offset="1" stop-color="#2684FF"/></linearGradient></defs>
<path d="M26.49 4H15.22c0 2.81 2.28 5.09 5.09 5.09h2.07v2c0 2.81 2.28 5.09 5.09 5.09V4.98A.98.98 0 0 0 26.49 4z" fill="#2684FF"/>
<path d="M20.91 9.62H9.64c0 2.81 2.28 5.09 5.09 5.09h2.07v2c0 2.81 2.28 5.09 5.09 5.09V10.6a.98.98 0 0 0-.98-.98z" fill="url(#jg1)"/>
<path d="M15.33 15.23H4.06c0 2.81 2.28 5.09 5.09 5.09h2.07v2c0 2.81 2.28 5.09 5.09 5.09V16.21a.98.98 0 0 0-.98-.98z" fill="url(#jg2)"/>
</svg>
<span class="a" style="left:77.90px;top:15px;font-size:22px;line-height:25px;color:#172B4D;transform:scaleX(0.8885);">Jira</span>
<span class="a" style="left:140.00px;top:21px;font-size:13.8px;line-height:15px;color:#0C66E4;transform:scaleX(1.0469);-webkit-text-stroke:0.35px #0C66E4;">Your work</span>
<svg class="a" style="left:208px;top:26px" width="8" height="6" viewBox="0 0 8 6"><path d="M1.1 1.2 L4 4.1 L6.9 1.2" fill="none" stroke="#0C66E4" stroke-width="2.2" stroke-linecap="round" stroke-linejoin="round"/></svg>
<span class="a" style="left:235.80px;top:21px;font-size:13.8px;line-height:15px;color:#44546F;-webkit-text-stroke:0.35px #44546F;">Projects</span>
<svg class="a" style="left:290px;top:26px" width="8" height="6" viewBox="0 0 8 6"><path d="M1.1 1.2 L4 4.1 L6.9 1.2" fill="none" stroke="#44546F" stroke-width="2.2" stroke-linecap="round" stroke-linejoin="round"/></svg>
<span class="a" style="left:318.20px;top:21px;font-size:13.8px;line-height:15px;color:#44546F;-webkit-text-stroke:0.35px #44546F;">Filters</span>
<svg class="a" style="left:360px;top:26px" width="8" height="6" viewBox="0 0 8 6"><path d="M1.1 1.2 L4 4.1 L6.9 1.2" fill="none" stroke="#44546F" stroke-width="2.2" stroke-linecap="round" stroke-linejoin="round"/></svg>
<span class="a" style="left:388.20px;top:21px;font-size:13.8px;line-height:15px;color:#44546F;-webkit-text-stroke:0.35px #44546F;">Dashboards</span>
<svg class="a" style="left:467px;top:26px" width="8" height="6" viewBox="0 0 8 6"><path d="M1.1 1.2 L4 4.1 L6.9 1.2" fill="none" stroke="#44546F" stroke-width="2.2" stroke-linecap="round" stroke-linejoin="round"/></svg>
<span class="a" style="left:495.00px;top:21px;font-size:13.8px;line-height:15px;color:#44546F;transform:scaleX(0.9646);-webkit-text-stroke:0.35px #44546F;">Teams</span>
<svg class="a" style="left:539px;top:26px" width="8" height="6" viewBox="0 0 8 6"><path d="M1.1 1.2 L4 4.1 L6.9 1.2" fill="none" stroke="#44546F" stroke-width="2.2" stroke-linecap="round" stroke-linejoin="round"/></svg>
<span class="a" style="left:566.80px;top:21px;font-size:13.8px;line-height:15px;color:#44546F;transform:scaleX(0.9474);-webkit-text-stroke:0.35px #44546F;">Plans</span>
<svg class="a" style="left:604px;top:26px" width="8" height="6" viewBox="0 0 8 6"><path d="M1.1 1.2 L4 4.1 L6.9 1.2" fill="none" stroke="#44546F" stroke-width="2.2" stroke-linecap="round" stroke-linejoin="round"/></svg>
<span class="a" style="left:632.50px;top:21px;font-size:13.8px;line-height:15px;color:#44546F;transform:scaleX(0.9540);-webkit-text-stroke:0.35px #44546F;">Assets</span>
<span class="a" style="left:692.50px;top:21px;font-size:13.8px;line-height:15px;color:#44546F;transform:scaleX(1.0078);-webkit-text-stroke:0.35px #44546F;">Apps</span>
<svg class="a" style="left:728px;top:26px" width="8" height="6" viewBox="0 0 8 6"><path d="M1.1 1.2 L4 4.1 L6.9 1.2" fill="none" stroke="#44546F" stroke-width="2.2" stroke-linecap="round" stroke-linejoin="round"/></svg>
<div class="a" style="left:138px;top:53px;width:80px;height:3px;background:#0C66E4;border-radius:1.5px 1.5px 0 0"></div>
<div class="a" style="left:758px;top:12px;width:65px;height:32px;border-radius:3px;background:#0C66E4"></div>
<span class="a" style="left:770.60px;top:21px;font-size:13.6px;line-height:15px;color:#fff;font-weight:700;transform:scaleX(0.9544);">Create</span>
<div class="a" style="left:1540px;top:12px;width:200px;height:32px;border:1px solid #8590A2;border-radius:5px;background:#fff"></div>
<svg class="a" style="left:1549px;top:21px" width="15" height="15" viewBox="0 0 15 15"><circle cx="6.6" cy="6.4" r="4.6" fill="none" stroke="#44546F" stroke-width="1.5"/><path d="M10 9.9 L13.2 13.1" stroke="#44546F" stroke-width="1.6" stroke-linecap="round"/></svg>
<span class="a" style="left:1571.50px;top:20px;font-size:14px;line-height:16px;color:#626F86;transform:scaleX(0.9806);">Search</span>
<svg class="a" style="left:1750px;top:16px" width="24" height="24" viewBox="0 0 24 24"><path fill="#44546F" d="M6.485 17.669a2 2 0 0 0 2.829 0l-2.829-2.83a2 2 0 0 0 0 2.83zm4.897-12.191l-.725.725c-.782.782-2.21 1.813-3.206 2.311l-3.017 1.509c-.495.248-.584.774-.187 1.171l8.556 8.556c.398.396.922.313 1.171-.188l1.51-3.016c.494-.988 1.526-2.42 2.311-3.206l.725-.726a5.048 5.048 0 0 0 .64-6.356 1.01 1.01 0 1 0-1.354-1.494c-.023.025-.046.049-.066.075a5.043 5.043 0 0 0-2.788-.84 5.036 5.036 0 0 0-3.57 1.478z"/></svg>
<div class="a" style="left:1786px;top:12px;width:32px;height:32px;border-radius:50%;background:#EBECF0"></div>
<svg class="a" style="left:1790px;top:16px" width="24" height="24" viewBox="0 0 24 24"><circle cx="12" cy="12" r="10" fill="#44546F"/><g transform="translate(12 12.5) scale(1.02 1.13) translate(-12 -11.7)"><circle cx="12" cy="16.2" r="1.15" fill="#fff"/><path d="M9.1 9.9a2.9 2.9 0 1 1 4.6 2.35c-1.1.8-1.7 1.2-1.7 2.15" fill="none" stroke="#fff" stroke-width="2" stroke-linecap="round"/></g></svg>
<svg class="a" style="left:1830px;top:16px" width="24" height="24" viewBox="-12 -12 24 24"><g transform="translate(-0.35,-0.4) rotate(22.5)"><circle r="6.2" fill="none" stroke="#44546F" stroke-width="2.6"/><rect x="-1.9" y="-9" width="3.8" height="4" rx="0.9" transform="rotate(0)" fill="#44546F"/><rect x="-1.9" y="-9" width="3.8" height="4" rx="0.9" transform="rotate(45)" fill="#44546F"/><rect x="-1.9" y="-9" width="3.8" height="4" rx="0.9" transform="rotate(90)" fill="#44546F"/><rect x="-1.9" y="-9" width="3.8" height="4" rx="0.9" transform="rotate(135)" fill="#44546F"/><rect x="-1.9" y="-9" width="3.8" height="4" rx="0.9" transform="rotate(180)" fill="#44546F"/><rect x="-1.9" y="-9" width="3.8" height="4" rx="0.9" transform="rotate(225)" fill="#44546F"/><rect x="-1.9" y="-9" width="3.8" height="4" rx="0.9" transform="rotate(270)" fill="#44546F"/><rect x="-1.9" y="-9" width="3.8" height="4" rx="0.9" transform="rotate(315)" fill="#44546F"/></g></svg>
<div class="a" style="left:1872px;top:16px;width:24px;height:24px;border-radius:50%;background:#172B4D"></div>
<span class="a" style="left:1877.80px;top:23px;font-size:10.2px;line-height:11px;color:#fff;font-weight:700;transform:scaleX(0.8618);">PC</span>
<div class="a" style="left:1784px;top:52px;width:37px;height:20px;border-radius:3px;background:#44546F;z-index:5"></div>
<span class="a" style="left:1790.30px;top:56px;font-size:12px;line-height:14px;color:#fff;-webkit-text-stroke:0.25px #fff;z-index:6;">Help</span>
</body>
</html>
